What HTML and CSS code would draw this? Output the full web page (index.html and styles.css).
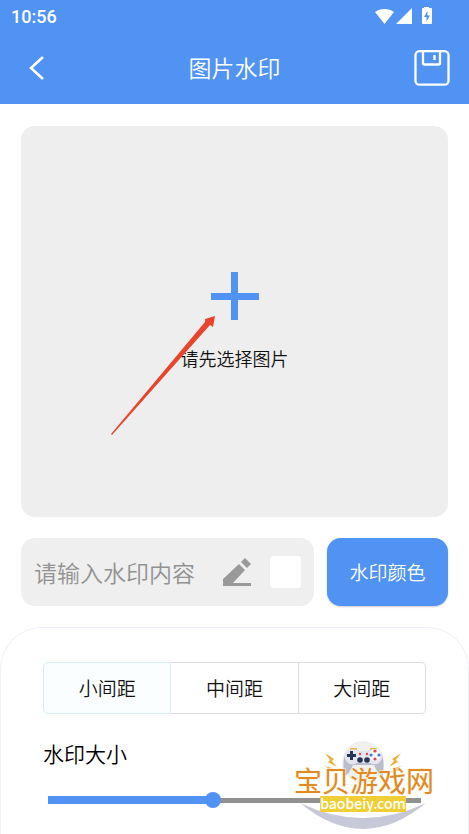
FILE: index.html
```html
<!DOCTYPE html>
<html lang="zh-CN">
<head>
  <meta charset="UTF-8">
  <meta name="viewport" content="width=device-width, initial-scale=1">
  <title>图片水印</title>
  <link rel="stylesheet" href="styles.css">
</head>
<body>
  <header class="top">
    <div class="status">
      <span class="time">10:56</span>
      <svg class="status-icons" width="60" height="20" viewBox="0 0 60 20" fill="#fff">
        <path d="M1 5C6 1 15 1 20 5L10.500 17Z"/>
        <path d="M38 1V17H22Z"/>
        <path fill-rule="evenodd" d="M50 0h5v1h2q1 0 1 1v14q0 1-1 1h-8q-1 0-1-1V2q0-1 1-1h1zM53.500 4L50 10h2.500v4.500L56 8.500h-2.500z"/>
      </svg>
    </div>
    <div class="nav">
      <button class="icon-btn" aria-label="返回">
        <svg width="36" height="36" viewBox="0 0 36 36" fill="none" stroke="#fff" stroke-width="2.500"><path d="M24 7L12 18L24 29"/></svg>
      </button>
      <h1>图片水印</h1>
      <button class="icon-btn" aria-label="保存">
        <svg width="36" height="36" viewBox="0 0 36 36" fill="none" stroke="#fff" stroke-width="2.300">
          <rect x="1.500" y="1.200" width="33" height="33.500" rx="4"/>
          <path d="M9 1V13Q9 14.500 10.500 14.500H24.500Q26 14.500 26 13V1"/>
          <path d="M20.500 5V10"/>
        </svg>
      </button>
    </div>
  </header>

  <main>
    <button class="picker">
      <svg width="48" height="48" viewBox="0 0 48 48" fill="#5093f2"><path d="M20 0h7v21h21v7H27v20h-7V28H0v-7h20z"/></svg>
      <span>请先选择图片</span>
      <svg class="arrow" width="106" height="120" viewBox="0 0 106 120" fill="#e8452c"><path d="M0 118L94 6L94 3L104 0L102 11L99 9L1 119Z"/></svg>
    </button>

    <div class="row">
      <div class="field">
        <input type="text" class="content" placeholder="请输入水印内容" aria-label="水印内容">
        <svg width="28" height="28" viewBox="0 0 28 28" fill="#999"><path d="M0 28V21L16 6L22 12L10 25H28V28ZM18 4L22 0L28 6L24 10Z"/></svg>
        <span class="swatch"></span>
      </div>
      <button class="color-btn">水印颜色</button>
    </div>
  </main>

  <section class="panel">
    <div class="segments">
      <button class="active">小间距</button>
      <button>中间距</button>
      <button>大间距</button>
    </div>
    <label for="size">水印大小</label>
    <input type="range" id="size" min="0" max="100" value="44">
  </section>

  <svg class="site-mark" width="150" height="94" viewBox="0 0 150 94">
    <circle cx="73" cy="22" r="21" fill="#f0f0ef"/>
    <g fill="#e9b33b">
      <path d="M35 13L44 19L42 21L47 27L38 22L40 20Z"/>
      <path d="M111 13L102 19L104 21L99 27L108 22L106 20Z"/>
      <path d="M34 26L42 28L39 29L45 32L36 30L38 28Z"/>
      <path d="M112 26L104 28L107 29L101 32L110 30L108 28Z"/>
      <rect x="60" y="8" width="7" height="3" rx="1"/>
      <rect x="80" y="8" width="7" height="3" rx="1"/>
    </g>
    <path d="M54 36Q52 16 57 12Q63 9 70 11H77Q84 9 90 12Q95 16 93 36Q88 35 84 25H63Q59 35 54 36Z" fill="#bbbdcb"/>
    <path d="M57 22Q51 13 59 10Q66 8 69 11H78Q81 8 88 10Q96 13 90 22Q86 26 80 23H67Q61 26 57 22Z" fill="#e4e6ee"/>
    <path d="M60 11h3v3h3v3h-3v3h-3v-3h-3v-3h3z" fill="#253552"/>
    <g fill="#253552"><circle cx="70" cy="20" r="2.800"/><circle cx="77" cy="20" r="2.800"/></g>
    <circle cx="70" cy="14" r="1.200" fill="#d44"/>
    <circle cx="77" cy="14" r="1.200" fill="#d44"/>
    <circle cx="85" cy="15" r="6" fill="#f7f8fc"/>
    <g fill="#e0474c"><circle cx="85" cy="11" r="1.600"/><circle cx="85" cy="19" r="1.600"/></g>
    <g fill="#4879cb"><circle cx="81" cy="15" r="1.600"/><circle cx="89" cy="15" r="1.600"/></g>
    <path d="M10 63Q73 115 136 63Q73 93 10 63Z" fill="#c8c9d8"/>
    <rect x="30" y="56" width="86" height="16" fill="#efcf35"/>
    <text class="mark-name" x="74" y="52" text-anchor="middle">宝贝游戏网</text>
    <text class="mark-url" x="73" y="69" text-anchor="middle">baobeiy.com</text>
  </svg>
</body>
</html>
```
FILE: styles.css
```css
* {
  box-sizing: border-box;
}
body {
  margin: 0;
  min-height: 100vh;
  display: flex;
  flex-direction: column;
  position: relative;
  background: #fff;
  color: #111;
  font-family: "Noto Sans CJK SC", sans-serif;
  font-size: 18px;
  font-weight: 350;
}
button, input {
  font-family: inherit;
  font-weight: inherit;
  color: inherit;
  margin: 0;
  padding: 0;
  border: 0;
}
button {
  cursor: pointer;
}
svg {
  display: block;
  flex: none;
}
.top {
  background: #5093f2;
  color: #fff;
}
.status {
  height: 32px;
  padding: 0 35px 0 11px;
  display: flex;
  align-items: center;
  justify-content: space-between;
}
.time {
  font: 500 18px Roboto, sans-serif;
}
.status-icons {
  margin-top: 2px;
}
.nav {
  height: 72px;
  padding: 0 19px;
  display: flex;
  align-items: center;
  justify-content: space-between;
}
.nav h1 {
  margin: 0;
  font-size: 23px;
  line-height: 32px;
  padding-bottom: 2px;
  font-weight: 350;
}
.icon-btn {
  background: none;
}
main {
  padding: 22px 21px 21px;
  display: flex;
  flex-direction: column;
  gap: 21px;
}
.picker {
  position: relative;
  height: 391px;
  display: flex;
  flex-direction: column;
  align-items: center;
  justify-content: center;
  gap: 25px;
  background: #eee;
  border-radius: 14px;
  font-size: 18px;
}
.arrow {
  position: absolute;
  left: 90px;
  top: 190px;
}
.row {
  display: flex;
  gap: 13px;
}
.field {
  flex: 1;
  min-width: 0;
  height: 68px;
  padding: 0 13px;
  display: flex;
  align-items: center;
  gap: 19px;
  background: #efefef;
  border-radius: 14px;
}
.content {
  flex: 1;
  min-width: 0;
  height: 40px;
  background: none;
  font-size: 23px;
}
.content::placeholder {
  color: #929292;
}
.swatch {
  flex: none;
  width: 31px;
  height: 32px;
  background: #fff;
  border-radius: 3px;
}
.color-btn {
  width: 121px;
  padding-bottom: 2px;
  background: #5093f2;
  border-radius: 14px;
  box-shadow: 0 1px 2px #ccc;
  color: #fff;
  font-size: 19px;
}
.panel {
  flex: 1;
  padding: 34px 42px 24px;
  display: flex;
  flex-direction: column;
  border: 1px solid #efeffa;
  border-bottom: 0;
  border-radius: 42px 42px 0 0;
}
.segments {
  display: flex;
  height: 52px;
}
.segments button {
  flex: 1;
  padding-bottom: 2px;
  background: #fff;
  border: 1px solid #ddd;
  border-left: 0;
  font-size: 19px;
}
.segments button:last-child {
  border-radius: 0 5px 5px 0;
}
.segments .active {
  background: #fafeff;
  border: 1px solid #d5edf5;
  border-radius: 5px 0 0 5px;
}
.panel label {
  margin-top: 23px;
  line-height: 32px;
  font-size: 21px;
  color: #000;
}
#size {
  appearance: none;
  height: 16px;
  margin: 23px 5px 0;
  background:
    linear-gradient(#5093f2, #5093f2) left center / 44% 8px no-repeat,
    linear-gradient(#919191, #919191) left center / 100% 5px no-repeat;
}
#size::-webkit-slider-thumb {
  appearance: none;
  width: 16px;
  height: 16px;
  background: #5093f2;
  border-radius: 50%;
}
.site-mark {
  position: absolute;
  right: 29px;
  bottom: 0;
  pointer-events: none;
}
.mark-name {
  font-size: 28px;
  font-weight: 400;
  fill: #df8a26;
  stroke: #fff3d5;
  stroke-width: 1px;
  paint-order: stroke;
}
.mark-url {
  font-family: "Noto Sans CJK SC", sans-serif;
  font-size: 14px;
  font-weight: 500;
  fill: #fff;
}
```
